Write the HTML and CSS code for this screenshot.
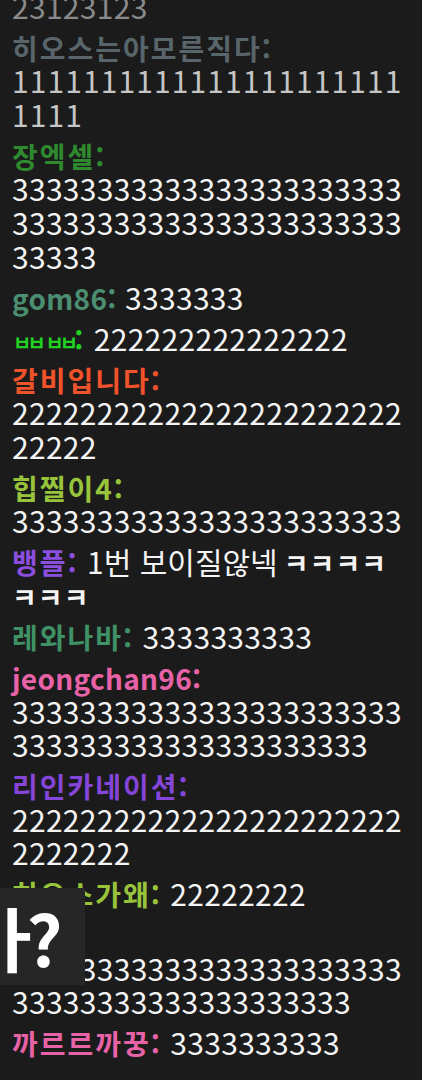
FILE: index.html
```html
<!DOCTYPE html>
<html lang="ko">
<head>
<meta charset="utf-8">
<title>Chat</title>
<link rel="stylesheet" href="styles.css">
</head>
<body>
<div class="chat">
  <div class="msg old"><span class="name c-gray">아무개:</span> <span class="text digits">2312312323123123231231223123123</span></div>
  <div class="msg"><span class="name c-fade">히오스는아모른직다:</span> <span class="text digits t-fade ones">11111111111111111111111111</span></div>
  <div class="msg"><span class="name c-forest">장엑셀:</span> <span class="text digits">333333333333333333333333333333333333333333333333333</span></div>
  <div class="msg"><span class="name latin c-sea">gom86:</span> <span class="text digits">3333333</span></div>
  <div class="msg"><span class="name c-lime small">ㅂㅂ ㅂㅂ</span><span class="name c-lime">:</span> <span class="text digits">222222222222222</span></div>
  <div class="msg"><span class="name c-orange">갈비입니다:</span> <span class="text digits">2222222222222222222222222222</span></div>
  <div class="msg"><span class="name c-yellowgreen">힙찔이4:</span> <span class="text digits">33333333333333333333333</span></div>
  <div class="msg"><span class="name c-violet">뱅플:</span> <span class="text">1번 보이질않넥<span class="jamo">ㅋㅋㅋㅋㅋㅋㅋ</span></span></div>
  <div class="msg"><span class="name c-sea2">레와나바:</span> <span class="text digits">3333333333</span></div>
  <div class="msg"><span class="name latin c-pink">jeongchan96:</span> <span class="text digits">33333333333333333333333333333333333333333333</span></div>
  <div class="msg"><span class="name c-violet2">리인카네이션:</span> <span class="text digits">222222222222222222222222222222</span></div>
  <div class="msg"><span class="name c-yellowgreen">히오스가왜:</span> <span class="text digits">22222222</span></div>
  <div class="msg"><span class="name c-sea">민트:</span> <span class="text digits">3333333333333333333333333333333333333333333</span></div>
  <div class="msg"><span class="name c-pink">까르르까꿍:</span> <span class="text digits">3333333333</span></div>
</div>
<div class="popup"><span class="popup-bar">ㅏ</span><span class="popup-q">?</span></div>
</body>
</html>
```

FILE: styles.css
```css
html, body {
  margin: 0;
  padding: 0;
  background: #1b1b1b;
}

body {
  font-family: "Noto Sans CJK KR", "Noto Sans", sans-serif;
  position: relative;
  height: 1080px;
  overflow: hidden;
}

.chat {
  height: 1080px;
  box-sizing: border-box;
  display: flex;
  flex-direction: column;
  justify-content: flex-end;
  gap: 7.4px;
  padding: 0 16px 20px 12px;
  overflow: hidden;
}

.msg {
  flex-shrink: 0;
  font-size: 30px;
  line-height: 33.6px;
  color: #f4f4f4;
  overflow-wrap: break-word;
}

.text {
  line-height: 1;
}

.digits {
  letter-spacing: 0.3px;
}

.name {
  font-size: 28px;
  font-weight: 700;
  letter-spacing: 2px;
  line-height: 1;
}

.name.latin {
  letter-spacing: 0.3px;
}

.name.small {
  font-size: 20px;
  letter-spacing: -4px;
  word-spacing: 2px;
  margin-left: 1px;
}

.ones {
  letter-spacing: 1.1px;
}

.jamo {
  font-size: 27px;
  font-weight: 700;
  letter-spacing: 1px;
  margin-left: 6px;
  line-height: 1;
}

.old .text { color: #8a8a8a; }
.t-fade { color: #c6c6c6; }

.c-gray { color: #6a6a6a; }
.c-fade { color: #58666b; }
.c-forest { color: #2f8a2f; }
.c-sea { color: #4b8f70; }
.c-lime { color: #22d022; }
.c-orange { color: #f0522a; }
.c-yellowgreen { color: #98c43c; }
.c-violet { color: #8b4fe0; }
.c-sea2 { color: #3f9166; }
.c-pink { color: #e862a8; }
.c-violet2 { color: #8445d8; }

.popup {
  position: absolute;
  left: 0;
  top: 888px;
  width: 85px;
  height: 97px;
  background: #262626;
  overflow: hidden;
  white-space: nowrap;
  font-size: 70px;
  font-weight: 700;
  line-height: 97px;
  color: #ffffff;
}

.popup-bar {
  margin-left: -18px;
}

.popup-q {
  margin-left: -20px;
}
```
